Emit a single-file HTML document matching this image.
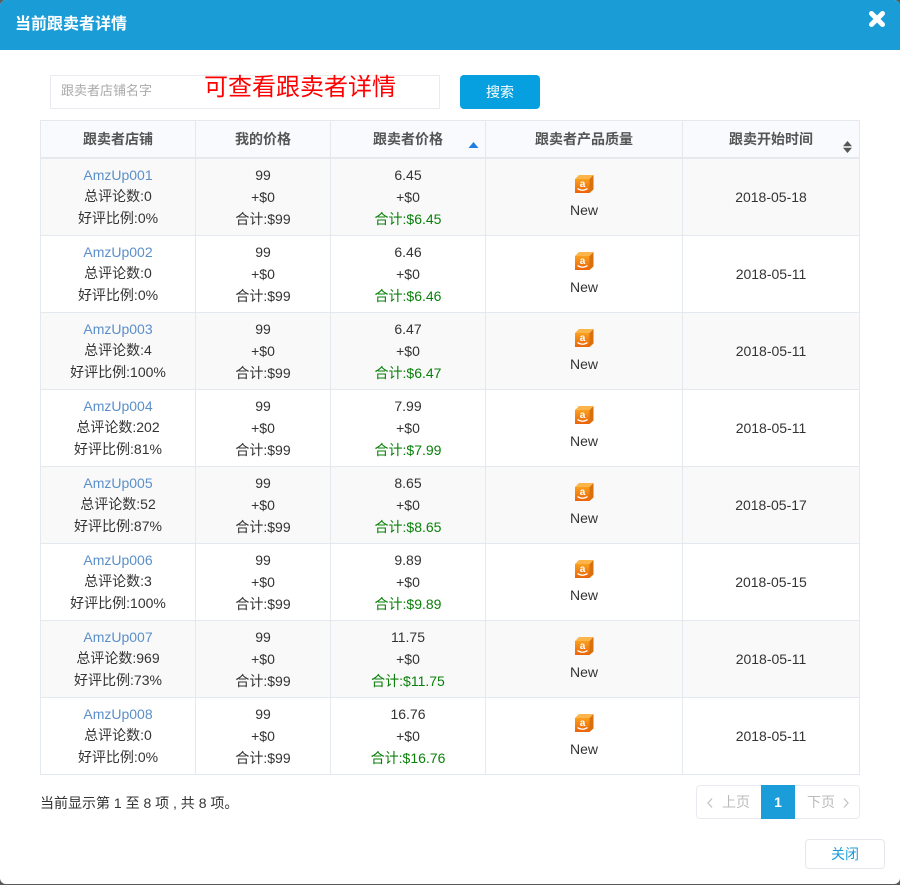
<!DOCTYPE html>
<html><head><meta charset="utf-8"><style>
*{box-sizing:border-box;margin:0;padding:0}
html,body{width:900px;height:885px;overflow:hidden;background:#5a5a5a;font:14px/22px "Liberation Sans","Noto Sans CJK SC",sans-serif;color:#333}
.a{position:absolute}
#m{position:absolute;left:0;top:0;width:900px;height:884px;background:#fff;border-radius:6px;overflow:hidden}
#h{position:absolute;left:0;top:0;width:900px;height:50px;background:#1a9dd7}
#t{left:15px;top:13px;font-size:16px;font-weight:bold;color:#fff;line-height:24px}
#tb{left:40px;top:120px;width:820px;height:655px;border:1px solid #e4e8ef}
.th{position:absolute;top:0;height:36px;background:#f8fafd;border-right:1px solid #e4e8ef;text-align:center;font-weight:bold;color:#555;line-height:37px}
.hl{position:absolute;left:0;top:36px;width:818px;height:2px;background:#e4e8ef}
.r{position:absolute;left:0;width:818px;height:77px;border-bottom:1px solid #e4e8ef}
.r.o{background:#f9f9f9}
.c{position:absolute;top:0;height:76px;border-right:1px solid #e4e8ef;text-align:center}
.c1{left:0;width:155px;padding-top:5px}.c2{left:155px;width:135px;padding-top:5px}.c3{left:290px;width:155px;padding-top:5px}.c4{left:445px;width:197px}.c5{left:642px;width:176px;border-right:0;padding-top:27px}
.c1 div:nth-child(2){height:21px;line-height:21px}
.c a{color:#5b8fc9;text-decoration:none}.g{color:#0a800a}
.c4 svg{position:absolute;left:89px;top:16px}.c4 span{position:absolute;left:0;right:0;top:40px}
</style></head><body>
<div id="m">
<div id="h"></div>
<div id="t" class="a">当前跟卖者详情</div>
<svg class="a" style="left:867px;top:9px" width="20" height="20" viewBox="0 0 20 20"><path d="M4.500 4.500L15.500 15.500M15.500 4.500L4.500 15.500" stroke="#fff" stroke-width="5" stroke-linecap="round"/></svg>

<div class="a" style="left:50px;top:75px;width:390px;height:34px;border:1px solid #e8ebf0"></div>
<div class="a" style="left:61px;top:80px;font-size:13px;color:#aaa">跟卖者店铺名字</div>
<div class="a" style="left:204px;top:72px;font-size:24px;line-height:32px;color:#f00;white-space:nowrap">可查看跟卖者详情</div>
<div class="a" style="left:460px;top:75px;width:80px;height:34px;background:#06a0e0;border-radius:4px;color:#fff;text-align:center;line-height:34px">搜索</div>

<div id="tb" class="a">
<div class="th" style="left:0;width:155px">跟卖者店铺</div>
<div class="th" style="left:155px;width:135px">我的价格</div>
<div class="th" style="left:290px;width:155px">跟卖者价格
<svg class="a" style="left:137px;top:20px" width="12" height="8"><path d="M0.500 7L5.500 1L10.500 7Z" fill="#1e7fe0"/></svg></div>
<div class="th" style="left:445px;width:197px">跟卖者产品质量</div>
<div class="th" style="left:642px;width:176px;border-right:0">跟卖开始时间
<svg class="a" style="left:159px;top:19px" width="12" height="14"><path d="M1 6.300L5.500 1L10 6.300ZM1 7.700L5.500 13L10 7.700Z" fill="#555"/></svg></div>
<div class="hl"></div>

<div class="r o" style="top:38px"><div class="c c1"><div><a>AmzUp001</a></div><div>总评论数:0</div><div>好评比例:0%</div></div><div class="c c2"><div>99</div><div>+$0</div><div>合计:$99</div></div><div class="c c3"><div>6.45</div><div>+$0</div><div class="g">合计:$6.45</div></div><div class="c c4"><svg width="20" height="20" viewBox="0 0 20 20"><defs><linearGradient id="f" x1="0" y1="0" x2="0" y2="1"><stop offset="0" stop-color="#fa9f1e"/><stop offset="1" stop-color="#ea640a"/></linearGradient></defs><path d="M4 0H18.500L14.500 4H0Z" fill="#fcb54a"/><path d="M14.500 4L18.500 0V14.500L14.500 18Z" fill="#d8700e"/><path d="M0 4H14.500V18H0Z" fill="url(#f)"/><path d="M2.500 13.500Q7.500 17 12.500 13.500" fill="none" stroke="#fff" stroke-width="1.300"/><text x="7.500" y="12" font-size="10" font-weight="bold" fill="#fff" text-anchor="middle">a</text></svg><span>New</span></div><div class="c c5">2018-05-18</div></div>

<div class="r" style="top:115px"><div class="c c1"><div><a>AmzUp002</a></div><div>总评论数:0</div><div>好评比例:0%</div></div><div class="c c2"><div>99</div><div>+$0</div><div>合计:$99</div></div><div class="c c3"><div>6.46</div><div>+$0</div><div class="g">合计:$6.46</div></div><div class="c c4"><svg width="20" height="20" viewBox="0 0 20 20"><path d="M4 0H18.500L14.500 4H0Z" fill="#fcb54a"/><path d="M14.500 4L18.500 0V14.500L14.500 18Z" fill="#d8700e"/><path d="M0 4H14.500V18H0Z" fill="url(#f)"/><path d="M2.500 13.500Q7.500 17 12.500 13.500" fill="none" stroke="#fff" stroke-width="1.300"/><text x="7.500" y="12" font-size="10" font-weight="bold" fill="#fff" text-anchor="middle">a</text></svg><span>New</span></div><div class="c c5">2018-05-11</div></div>

<div class="r o" style="top:192px"><div class="c c1"><div><a>AmzUp003</a></div><div>总评论数:4</div><div>好评比例:100%</div></div><div class="c c2"><div>99</div><div>+$0</div><div>合计:$99</div></div><div class="c c3"><div>6.47</div><div>+$0</div><div class="g">合计:$6.47</div></div><div class="c c4"><svg width="20" height="20" viewBox="0 0 20 20"><path d="M4 0H18.500L14.500 4H0Z" fill="#fcb54a"/><path d="M14.500 4L18.500 0V14.500L14.500 18Z" fill="#d8700e"/><path d="M0 4H14.500V18H0Z" fill="url(#f)"/><path d="M2.500 13.500Q7.500 17 12.500 13.500" fill="none" stroke="#fff" stroke-width="1.300"/><text x="7.500" y="12" font-size="10" font-weight="bold" fill="#fff" text-anchor="middle">a</text></svg><span>New</span></div><div class="c c5">2018-05-11</div></div>

<div class="r" style="top:269px"><div class="c c1"><div><a>AmzUp004</a></div><div>总评论数:202</div><div>好评比例:81%</div></div><div class="c c2"><div>99</div><div>+$0</div><div>合计:$99</div></div><div class="c c3"><div>7.99</div><div>+$0</div><div class="g">合计:$7.99</div></div><div class="c c4"><svg width="20" height="20" viewBox="0 0 20 20"><path d="M4 0H18.500L14.500 4H0Z" fill="#fcb54a"/><path d="M14.500 4L18.500 0V14.500L14.500 18Z" fill="#d8700e"/><path d="M0 4H14.500V18H0Z" fill="url(#f)"/><path d="M2.500 13.500Q7.500 17 12.500 13.500" fill="none" stroke="#fff" stroke-width="1.300"/><text x="7.500" y="12" font-size="10" font-weight="bold" fill="#fff" text-anchor="middle">a</text></svg><span>New</span></div><div class="c c5">2018-05-11</div></div>

<div class="r o" style="top:346px"><div class="c c1"><div><a>AmzUp005</a></div><div>总评论数:52</div><div>好评比例:87%</div></div><div class="c c2"><div>99</div><div>+$0</div><div>合计:$99</div></div><div class="c c3"><div>8.65</div><div>+$0</div><div class="g">合计:$8.65</div></div><div class="c c4"><svg width="20" height="20" viewBox="0 0 20 20"><path d="M4 0H18.500L14.500 4H0Z" fill="#fcb54a"/><path d="M14.500 4L18.500 0V14.500L14.500 18Z" fill="#d8700e"/><path d="M0 4H14.500V18H0Z" fill="url(#f)"/><path d="M2.500 13.500Q7.500 17 12.500 13.500" fill="none" stroke="#fff" stroke-width="1.300"/><text x="7.500" y="12" font-size="10" font-weight="bold" fill="#fff" text-anchor="middle">a</text></svg><span>New</span></div><div class="c c5">2018-05-17</div></div>

<div class="r" style="top:423px"><div class="c c1"><div><a>AmzUp006</a></div><div>总评论数:3</div><div>好评比例:100%</div></div><div class="c c2"><div>99</div><div>+$0</div><div>合计:$99</div></div><div class="c c3"><div>9.89</div><div>+$0</div><div class="g">合计:$9.89</div></div><div class="c c4"><svg width="20" height="20" viewBox="0 0 20 20"><path d="M4 0H18.500L14.500 4H0Z" fill="#fcb54a"/><path d="M14.500 4L18.500 0V14.500L14.500 18Z" fill="#d8700e"/><path d="M0 4H14.500V18H0Z" fill="url(#f)"/><path d="M2.500 13.500Q7.500 17 12.500 13.500" fill="none" stroke="#fff" stroke-width="1.300"/><text x="7.500" y="12" font-size="10" font-weight="bold" fill="#fff" text-anchor="middle">a</text></svg><span>New</span></div><div class="c c5">2018-05-15</div></div>

<div class="r o" style="top:500px"><div class="c c1"><div><a>AmzUp007</a></div><div>总评论数:969</div><div>好评比例:73%</div></div><div class="c c2"><div>99</div><div>+$0</div><div>合计:$99</div></div><div class="c c3"><div>11.75</div><div>+$0</div><div class="g">合计:$11.75</div></div><div class="c c4"><svg width="20" height="20" viewBox="0 0 20 20"><path d="M4 0H18.500L14.500 4H0Z" fill="#fcb54a"/><path d="M14.500 4L18.500 0V14.500L14.500 18Z" fill="#d8700e"/><path d="M0 4H14.500V18H0Z" fill="url(#f)"/><path d="M2.500 13.500Q7.500 17 12.500 13.500" fill="none" stroke="#fff" stroke-width="1.300"/><text x="7.500" y="12" font-size="10" font-weight="bold" fill="#fff" text-anchor="middle">a</text></svg><span>New</span></div><div class="c c5">2018-05-11</div></div>

<div class="r" style="top:577px;border-bottom:0"><div class="c c1"><div><a>AmzUp008</a></div><div>总评论数:0</div><div>好评比例:0%</div></div><div class="c c2"><div>99</div><div>+$0</div><div>合计:$99</div></div><div class="c c3"><div>16.76</div><div>+$0</div><div class="g">合计:$16.76</div></div><div class="c c4"><svg width="20" height="20" viewBox="0 0 20 20"><path d="M4 0H18.500L14.500 4H0Z" fill="#fcb54a"/><path d="M14.500 4L18.500 0V14.500L14.500 18Z" fill="#d8700e"/><path d="M0 4H14.500V18H0Z" fill="url(#f)"/><path d="M2.500 13.500Q7.500 17 12.500 13.500" fill="none" stroke="#fff" stroke-width="1.300"/><text x="7.500" y="12" font-size="10" font-weight="bold" fill="#fff" text-anchor="middle">a</text></svg><span>New</span></div><div class="c c5">2018-05-11</div></div>
</div>

<div class="a" style="left:40px;top:792px;white-space:pre">当前显示第 1 至 8 项 , 共 8 项。</div>

<div class="a" style="left:696px;top:785px;width:164px;height:34px;border:1px solid #e8ebf0;border-radius:4px"></div>
<svg class="a" style="left:704px;top:796px" width="12" height="14"><path d="M8 2.500L4 7L8 11.500" fill="none" stroke="#c4c4c4" stroke-width="1.300"/></svg>
<div class="a" style="left:722px;top:791px;color:#bbb">上页</div>
<div class="a" style="left:761px;top:785px;width:34px;height:34px;background:#1a9dd9;color:#fff;font-weight:bold;text-align:center;line-height:34px">1</div>
<div class="a" style="left:807px;top:791px;color:#bbb">下页</div>
<svg class="a" style="left:840px;top:796px" width="12" height="14"><path d="M4 2.500L8 7L4 11.500" fill="none" stroke="#c4c4c4" stroke-width="1.300"/></svg>

<div class="a" style="left:805px;top:839px;width:80px;height:30px;border:1px solid #e4e7ec;border-radius:4px;color:#1a9dd9;text-align:center;line-height:29px">关闭</div>
</div>
</body></html>
